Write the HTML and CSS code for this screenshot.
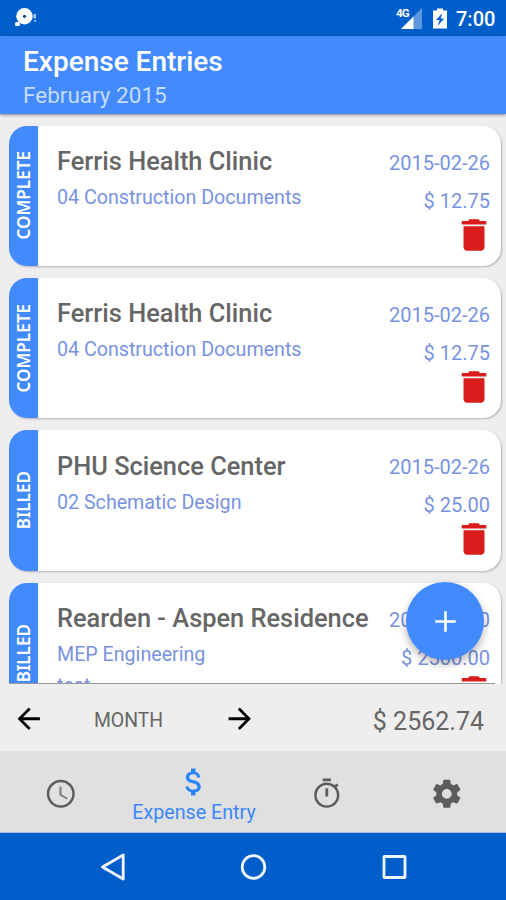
FILE: index.html
```html
<!DOCTYPE html>
<html lang="en">
<head>
<meta charset="utf-8">
<title>Expense Entries</title>
<link rel="stylesheet" href="styles.css">
</head>
<body>
<svg class="defs" aria-hidden="true">
  <symbol id="trash" viewBox="0 0 24 24"><path d="M6 19c0 1.100.9 2 2 2h8c1.100 0 2-.9 2-2V7H6v12zM19 4h-3.500l-1-1h-5l-1 1H5v2h14V4z"/></symbol>
  <symbol id="back" viewBox="0 0 24 24"><path d="M20 11H7.830l5.590-5.590L12 4l-8 8 8 8 1.410-1.410L7.830 13H20v-2z"/></symbol>
</svg>
<div class="status">
  <svg class="notice" viewBox="0 0 24 20"><circle cx="10.500" cy="8.300" r="8.200" fill="#fff"/><circle cx="10.500" cy="8.300" r="1.600" fill="#123f80"/><rect x="1" y="14" width="5" height="4" rx="1.500" fill="#fff"/><path d="M19.500 6h2.500v4.500h-2.500zM20.500 12h1.500v2h-1.500z" fill="#a9c8f0"/></svg>
  <div class="signal"><span class="net">4G</span>
    <svg class="bars" viewBox="0 0 21 21"><path d="M0 21 21 0V21z" fill="#5c97e0"/><path d="M0 21 12.500 8.500V21z" fill="#fff"/></svg>
  </div>
  <svg class="battery" viewBox="0 0 14 20"><path d="M4 0h6v2h4v18H0V2h4z" fill="#fff"/><path d="M9.500 4.500 3 11.500h3.600L4.600 17.500 11.200 10H7.600z" fill="#005ecb"/></svg>
  <span class="time">7:00</span>
</div>
<header class="header">
  <h1>Expense Entries</h1>
  <p>February 2015</p>
</header>
<main class="list">
  <article class="card">
    <div class="tag"><span>COMPLETE</span></div>
    <div class="info"><h2>Ferris Health Clinic</h2><p>04 Construction Documents</p></div>
    <div class="side"><span class="date">2015-02-26</span><span class="amount">$ 12.75</span><svg class="trash"><use href="#trash"/></svg></div>
  </article>
  <article class="card">
    <div class="tag"><span>COMPLETE</span></div>
    <div class="info"><h2>Ferris Health Clinic</h2><p>04 Construction Documents</p></div>
    <div class="side"><span class="date">2015-02-26</span><span class="amount">$ 12.75</span><svg class="trash"><use href="#trash"/></svg></div>
  </article>
  <article class="card">
    <div class="tag"><span>BILLED</span></div>
    <div class="info"><h2>PHU Science Center</h2><p>02 Schematic Design</p></div>
    <div class="side"><span class="date">2015-02-26</span><span class="amount">$ 25.00</span><svg class="trash"><use href="#trash"/></svg></div>
  </article>
  <article class="card">
    <div class="tag"><span>BILLED</span></div>
    <div class="info"><h2>Rearden - Aspen Residence</h2><p>MEP Engineering</p><p class="note">test</p></div>
    <div class="side"><span class="date">2015-02-20</span><span class="amount">$ 2500.00</span><svg class="trash"><use href="#trash"/></svg></div>
  </article>
  <div class="rule"></div>
</main>
<button class="fab" aria-label="Add"><svg viewBox="0 0 24 24"><path d="M19 12.900h-6.100v6.100h-1.800v-6.100H5v-1.800h6.100V5h1.800v6.100h6.100v1.800z" fill="#fff"/></svg></button>
<section class="period">
  <svg class="arrow"><use href="#back"/></svg>
  <span class="month">MONTH</span>
  <svg class="arrow next"><use href="#back"/></svg>
  <span class="total">$ 2562.74</span>
</section>
<nav class="tabs">
  <div class="tab"><svg class="icon" viewBox="0 0 24 24"><path d="M11.990 2C6.470 2 2 6.480 2 12s4.470 10 9.990 10C17.520 22 22 17.520 22 12S17.520 2 11.990 2zM12 20.200a8.200 8.200 0 1 1 0-16.400 8.200 8.200 0 0 1 0 16.400z"/><path d="M12.500 7H11v6l5.250 3.150.75-1.230-4.500-2.670z" opacity=".75"/></svg></div>
  <div class="tab active"><svg class="dollar" viewBox="0 0 24 24"><path d="M11.800 10.900c-2.270-.59-3-1.200-3-2.150 0-1.090 1.010-1.850 2.700-1.850 1.780 0 2.440.85 2.500 2.100h2.210c-.07-1.720-1.120-3.300-3.210-3.810V3h-3v2.160c-1.940.42-3.500 1.680-3.500 3.610 0 2.310 1.910 3.460 4.700 4.130 2.500.6 3 1.480 3 2.410 0 .69-.49 1.790-2.700 1.790-2.060 0-2.870-.92-2.980-2.100h-2.200c.12 2.190 1.760 3.420 3.680 3.830V21h3v-2.150c1.950-.37 3.500-1.500 3.500-3.550 0-2.840-2.430-3.810-4.700-4.400z"/></svg><span>Expense Entry</span></div>
  <div class="tab"><svg class="icon" viewBox="0 0 24 24"><path d="M15 1H9v2h6V1zm-4 13h2V8h-2v6zm8.030-6.610l1.420-1.420c-.43-.51-.9-.99-1.410-1.410l-1.420 1.420C16.070 4.740 14.120 4 12 4c-4.970 0-9 4.030-9 9s4.020 9 9 9 9-4.030 9-9c0-2.120-.74-4.070-1.970-5.610zM12 20.300a7.300 7.300 0 1 1 0-14.600 7.300 7.300 0 0 1 0 14.600z"/></svg></div>
  <div class="tab"><svg class="icon" viewBox="0 0 24 24"><path d="M19.430 12.980c.04-.32.07-.64.07-.98s-.03-.66-.07-.98l2.110-1.650c.19-.15.24-.42.12-.64l-2-3.460c-.12-.22-.39-.3-.61-.22l-2.490 1c-.52-.4-1.080-.73-1.690-.98l-.38-2.650C14.460 2.180 14.250 2 14 2h-4c-.25 0-.46.18-.49.42l-.38 2.650c-.61.25-1.170.59-1.690.98l-2.490-1c-.23-.09-.49 0-.61.22l-2 3.460c-.13.22-.07.49.12.64l2.110 1.650c-.04.32-.07.65-.07.98s.03.66.07.98l-2.110 1.650c-.19.15-.24.42-.12.64l2 3.460c.12.22.39.3.61.22l2.490-1c.52.4 1.080.73 1.690.98l.38 2.650c.03.24.24.42.49.42h4c.25 0 .46-.18.49-.42l.38-2.650c.61-.25 1.170-.59 1.690-.98l2.490 1c.23.09.49 0 .61-.22l2-3.460c.12-.22.07-.49-.12-.64l-2.110-1.650zM12 15.500c-1.930 0-3.500-1.570-3.500-3.500s1.570-3.500 3.500-3.500 3.500 1.570 3.500 3.500-1.570 3.500-3.500 3.500z"/></svg></div>
</nav>
<footer class="system">
  <svg viewBox="0 0 28 28"><path d="M25.200 2V26L4.500 14z"/></svg>
  <svg viewBox="0 0 28 28"><circle cx="14.500" cy="14" r="11.300"/></svg>
  <svg viewBox="0 0 28 28"><rect x="4" y="3.500" width="21" height="21" rx=".5"/></svg>
</footer>
</body>
</html>
```
FILE: styles.css
```css
* { box-sizing: border-box; }
body {
  margin: 0; width: 506px; height: 900px; overflow: hidden;
  display: flex; flex-direction: column; position: relative;
  background: #eee; font-family: Roboto, sans-serif; color: #666;
}
h1, h2, p { margin: 0; font-weight: 400; white-space: nowrap; }
.defs { display: none; }

.status { height: 36px; flex: none; background: #005ecb; display: flex; align-items: center; color: #fff; padding: 0 10px 0 14px; }
.notice { width: 24px; height: 20px; margin-right: auto; }
.signal { display: flex; align-items: flex-start; height: 21px; }
.net { font-size: 11.500px; line-height: 11px; font-weight: 700; letter-spacing: -.8px; width: 5px; }
.bars { width: 21px; height: 21px; }
.battery { width: 14px; height: 21px; margin-left: 11px; }
.time { font-size: 20px; font-weight: 500; line-height: 36px; margin-left: 9px; padding-top: 2px; width: 40px; white-space: nowrap; }

.header { height: 78px; flex: none; background: #448aff; padding: 10px 23px 0; z-index: 2; box-shadow: 0 1px 3px rgba(0,0,0,.45); }
.header h1 { color: #fff; font-size: 28px; font-weight: 500; line-height: 32px; }
.header p { color: #c5dcff; font-size: 22.500px; line-height: 34px; }

.list { height: 570px; flex: none; overflow: hidden; padding: 11.500px 5px 0 9px; display: flex; flex-direction: column; gap: 12px; position: relative; }
.card { height: 140.400px; flex: none; display: flex; background: #fff; border-radius: 18px; overflow: hidden; box-shadow: 1px 1px 2px rgba(0,0,0,.25); }
.tag { width: 28.500px; background: #448aff; display: flex; align-items: center; justify-content: center; }
.tag span { writing-mode: vertical-rl; transform: rotate(180deg); color: #fff; font-family: "Noto Sans", sans-serif; font-size: 17.100px; font-weight: 600; line-height: 28px; padding-right: 1px; }
.info { flex: 1; min-width: 0; padding: 19.500px 0 0 19.500px; }
.info h2 { font-size: 25.400px; font-weight: 500; line-height: 32px; }
.info p { color: #7892e2; font-size: 19.650px; line-height: 30px; padding-top: 6px; }
.info .note { padding-top: 1px; }
.side { display: flex; flex-direction: column; align-items: flex-end; padding: 22px 11px 0 0; color: #7892e2; font-size: 20px; line-height: 30px; }
.amount { margin-top: 8px; }
.trash { width: 42px; height: 42px; margin: -2px -5px 0 0; fill: #d91c1c; }
.rule { position: absolute; left: 9px; right: 11px; bottom: 0; height: 1px; background: #999; }

.fab { position: absolute; left: 406px; top: 582px; width: 78px; height: 78px; border: 0; padding: 0; border-radius: 50%; background: #448aff; box-shadow: 0 4px 8px rgba(0,0,0,.3); display: grid; place-items: center; z-index: 3; }
.fab svg { width: 35px; height: 35px; }

.period { height: 67px; flex: none; display: flex; align-items: center; padding: 2px 22px 0 12px; }
.arrow { width: 33.500px; height: 33.500px; fill: #000; }
.next { transform: scaleX(-1); }
.month { width: 177px; text-align: center; font-size: 19.400px; padding: 3px 11px 0 0; }
.total { margin-left: auto; font-size: 25px; padding-top: 5px; }

.tabs { height: 82px; flex: none; background: #e0e0e0; display: grid; grid-template-columns: 121px 146px 120px 119px; border-bottom: 1px solid #a9bcd8; }
.tab { display: flex; flex-direction: column; align-items: center; padding-top: 25.500px; }
.icon { width: 33.600px; height: 33.600px; fill: #5c5c5c; }
.active { color: #3a88fb; padding-top: 13px; }
.active span { font-size: 19.700px; line-height: 26px; white-space: nowrap; }
.dollar { width: 36px; height: 36px; fill: #2b83fa; }

.system { height: 67px; flex: none; background: #005ecb; display: flex; justify-content: space-between; align-items: center; padding: 0 98px; }
.system svg { width: 28px; height: 28px; fill: none; stroke: #f0f5ff; stroke-width: 2.800; stroke-linejoin: round; }
```
